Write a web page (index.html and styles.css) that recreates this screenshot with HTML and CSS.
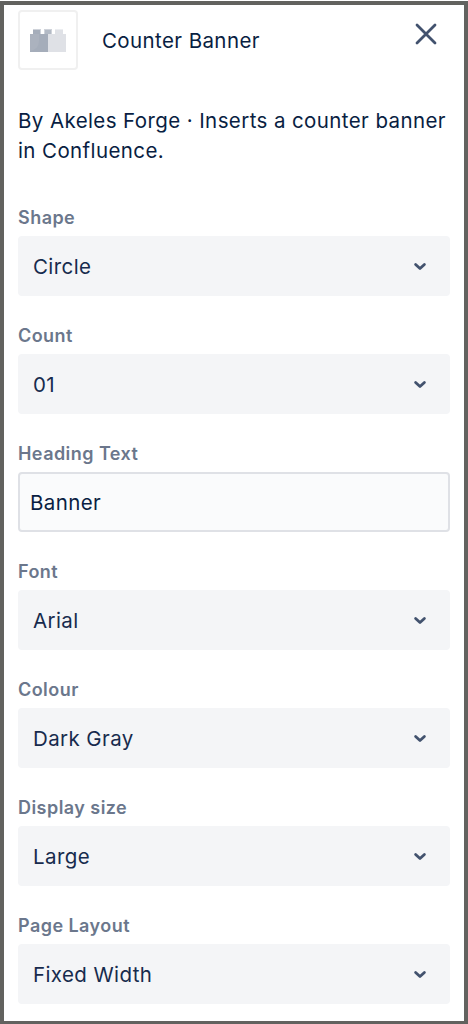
FILE: index.html
```html
<!DOCTYPE html>
<html lang="en">
<head>
  <meta charset="UTF-8">
  <title>Counter Banner</title>
  <meta name="viewport" content="width=device-width, initial-scale=1">
  <link rel="stylesheet" href="styles.css">
</head>
<body>
<div class="panel">
  <div class="header">
    <div class="logo">
      <svg width="36" height="24" viewBox="0 -1 36 24">
        <path fill="#cfd3da" d="M3 0h8v5H3zM14 0h8v5h-8z"/>
        <path fill="#a5adba" d="M3 1h7v4H3z"/>
        <path fill="#b3bac5" d="M15 1h6v4h-6z"/>
        <path fill="#dfe1e6" d="M25 1h8v4h-8zM18 5h18v18H18z"/>
        <path fill="#eceef1" d="M25 0h8v1h-8z"/>
        <path fill="#a5adba" d="M0 5h18v18H0z"/>
        <path fill="#abb2be" d="M0 5h9v7q0 8-9 10z"/>
      </svg>
    </div>
    <h1>Counter Banner</h1>
    <button type="button" class="close" aria-label="Close">
      <svg width="24" height="24" viewBox="0 0 24 24"><path d="M3 3l18 18M21 3L3 21"/></svg>
    </button>
  </div>

  <p class="description">By Akeles Forge · Inserts a counter banner in Confluence.</p>

  <form>
    <div class="field">
      <label for="shape">Shape</label>
      <div class="select">
        <select id="shape"><option>Circle</option></select>
        <svg width="14" height="10" viewBox="0 0 14 10"><path d="M2.6 3.4L7 7.5l4.4-4.1"/></svg>
      </div>
    </div>
    <div class="field">
      <label for="count">Count</label>
      <div class="select">
        <select id="count"><option>01</option></select>
        <svg width="14" height="10" viewBox="0 0 14 10"><path d="M2.6 3.4L7 7.5l4.4-4.1"/></svg>
      </div>
    </div>
    <div class="field">
      <label for="heading">Heading Text</label>
      <input type="text" id="heading" value="Banner">
    </div>
    <div class="field">
      <label for="font">Font</label>
      <div class="select">
        <select id="font"><option>Arial</option></select>
        <svg width="14" height="10" viewBox="0 0 14 10"><path d="M2.6 3.4L7 7.5l4.4-4.1"/></svg>
      </div>
    </div>
    <div class="field">
      <label for="colour">Colour</label>
      <div class="select">
        <select id="colour"><option>Dark Gray</option></select>
        <svg width="14" height="10" viewBox="0 0 14 10"><path d="M2.6 3.4L7 7.5l4.4-4.1"/></svg>
      </div>
    </div>
    <div class="field">
      <label for="size">Display size</label>
      <div class="select">
        <select id="size"><option>Large</option></select>
        <svg width="14" height="10" viewBox="0 0 14 10"><path d="M2.6 3.4L7 7.5l4.4-4.1"/></svg>
      </div>
    </div>
    <div class="field">
      <label for="layout">Page Layout</label>
      <div class="select">
        <select id="layout"><option>Fixed Width</option></select>
        <svg width="14" height="10" viewBox="0 0 14 10"><path d="M2.6 3.4L7 7.5l4.4-4.1"/></svg>
      </div>
    </div>
  </form>
</div>
</body>
</html>
```
FILE: styles.css
```css
* {
  box-sizing: border-box;
}
body {
  margin: 0;
  padding-top: 1px;
  background: #fff;
  color: #091e42;
  font-family: Inter, sans-serif;
  font-size: 20.5px;
  letter-spacing: 0.4px;
}
.panel {
  height: 1023px;
  padding: 5px 14px 0;
  border: 4px solid #62625f;
  border-bottom-width: 3px;
  overflow: hidden;
}
.header {
  display: flex;
  align-items: center;
  height: 60px;
}
.logo {
  display: flex;
  align-items: center;
  justify-content: center;
  width: 60px;
  height: 60px;
  border: 2px solid #f0f0f0;
  border-radius: 4px;
}
h1 {
  flex: 1;
  margin: 0 0 0 24px;
  padding-top: 2px;
  font-size: 20.5px;
  font-weight: 400;
  line-height: 30px;
}
.close {
  align-self: flex-start;
  margin: 12px 12px 0 0;
  padding: 0;
  border: none;
  background: none;
  line-height: 0;
  cursor: pointer;
}
.close path {
  fill: none;
  stroke: #42526e;
  stroke-width: 2.8;
  stroke-linecap: round;
}
.description {
  margin: 36px 0 40px;
  line-height: 30px;
}
.field {
  margin-bottom: 28px;
}
label {
  display: block;
  height: 30px;
  color: #6b778c;
  font-size: 18px;
  font-weight: 600;
  letter-spacing: 0.45px;
  line-height: 24px;
}
.select {
  display: flex;
  align-items: center;
  height: 60px;
  padding-right: 23px;
  background: #f4f5f7;
  border-radius: 4px;
}
.select path {
  fill: none;
  stroke: #42526e;
  stroke-width: 2.8;
  stroke-linecap: round;
  stroke-linejoin: round;
}
select, input {
  color: #172b4d;
  font: inherit;
  letter-spacing: inherit;
}
select {
  flex: 1;
  height: 60px;
  padding: 0 0 0 15px;
  border: none;
  background: none;
  appearance: none;
}
input {
  display: block;
  width: 100%;
  height: 60px;
  padding: 0 10px;
  border: 2px solid #dfe1e6;
  border-radius: 4px;
  background: #fafbfc;
  color: #091e42;
}
```
